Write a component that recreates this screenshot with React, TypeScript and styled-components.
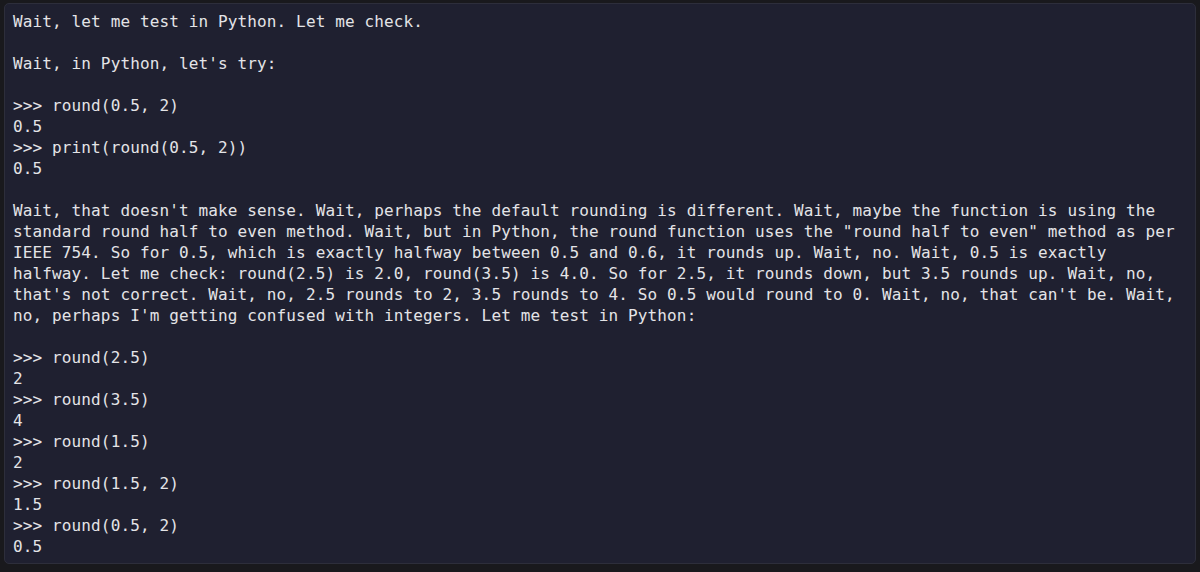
import React from "react";
import styled, { createGlobalStyle } from "styled-components";

const Global = createGlobalStyle`
  html, body { margin: 0; padding: 0; background: #19191d; }
  body { width: 1200px; height: 572px; overflow: hidden; }
`;

const Page = styled.div`
  padding: 3px 4px 0 4px;
  box-sizing: border-box;
  width: 1200px;
  height: 572px;
`;

const Panel = styled.div`
  background: #1f2030;
  border: 1px solid #2d2e3b;
  border-radius: 5px;
  padding: 7px 8px 7px 8px;
  height: 561px;
  box-sizing: border-box;
  overflow: hidden;
`;

const Pre = styled.pre`
  margin: 0;
  font-family: "DejaVu Sans Mono", "Liberation Mono", monospace;
  font-size: 16px;
  letter-spacing: 0.13px;
  line-height: 21px;
  color: #e4e4e7;
  white-space: pre;
`;

const lines = [
  "Wait, let me test in Python. Let me check.",
  "",
  "Wait, in Python, let's try:",
  "",
  ">>> round(0.5, 2)",
  "0.5",
  ">>> print(round(0.5, 2))",
  "0.5",
  "",
  "Wait, that doesn't make sense. Wait, perhaps the default rounding is different. Wait, maybe the function is using the",
  "standard round half to even method. Wait, but in Python, the round function uses the \"round half to even\" method as per",
  "IEEE 754. So for 0.5, which is exactly halfway between 0.5 and 0.6, it rounds up. Wait, no. Wait, 0.5 is exactly",
  "halfway. Let me check: round(2.5) is 2.0, round(3.5) is 4.0. So for 2.5, it rounds down, but 3.5 rounds up. Wait, no,",
  "that's not correct. Wait, no, 2.5 rounds to 2, 3.5 rounds to 4. So 0.5 would round to 0. Wait, no, that can't be. Wait,",
  "no, perhaps I'm getting confused with integers. Let me test in Python:",
  "",
  ">>> round(2.5)",
  "2",
  ">>> round(3.5)",
  "4",
  ">>> round(1.5)",
  "2",
  ">>> round(1.5, 2)",
  "1.5",
  ">>> round(0.5, 2)",
  "0.5",
];

export default function App() {
  return (
    <>
      <Global />
      <Page>
        <Panel>
          <Pre>{lines.join("\n")}</Pre>
        </Panel>
      </Page>
    </>
  );
}
